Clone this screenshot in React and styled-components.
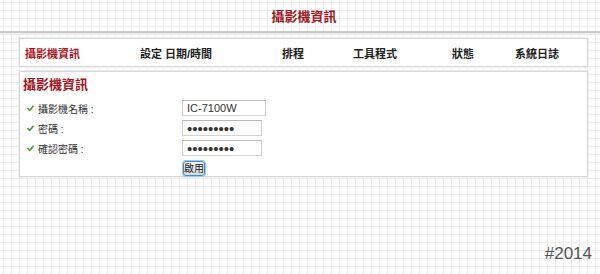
import React from 'react';
import styled, { createGlobalStyle } from 'styled-components';

const GlobalStyle = createGlobalStyle`
  html, body {
    margin: 0;
    padding: 0;
  }
  body {
    width: 600px;
    height: 274px;
    overflow: hidden;
    font-family: "Liberation Sans", "Noto Sans CJK TC", sans-serif;
    background-color: #fff;
    background-image:
      linear-gradient(to right, #ececec 1px, transparent 1px),
      linear-gradient(to bottom, #ececec 1px, transparent 1px);
    background-size: 8px 8px;
    background-position: 3px 2px;
  }
`;

const Page = styled.div`
  width: 600px;
  height: 274px;
  display: flex;
  flex-direction: column;
`;

const Header = styled.div`
  height: 31px;
  display: flex;
  align-items: center;
  justify-content: center;
  padding-left: 8px;
  border-bottom: 2px solid #cacaca;
  box-shadow: 0 1px 0 #eee;
`;

const Title = styled.h1`
  margin: 0;
  font-family: "Liberation Serif", "Noto Sans CJK TC", serif;
  font-size: 13px;
  font-weight: bold;
  color: #a3161d;
`;

const Box = styled.div`
  margin: ${p => p.$top}px 12px 0 19px;
  background: #fff;
  border: 1px solid #d6d6d6;
  box-shadow: 0 0 0 1px #f0f0f0;
`;

const Nav = styled.div`
  height: 27px;
  display: flex;
  align-items: center;
  padding-left: 5px;
`;

const NavItem = styled.span`
  width: ${p => p.$w}px;
  flex: none;
  font-size: 11px;
  font-weight: bold;
  color: ${p => (p.$active ? '#b0151c' : '#222')};
  white-space: nowrap;
`;

const Panel = styled.div`
  padding: 4px 0 2px 3px;
  height: 98px;
`;

const PanelTitle = styled.h2`
  margin: 0 0 5px 0;
  font-family: "Liberation Serif", "Noto Sans CJK TC", serif;
  font-size: 13px;
  font-weight: bold;
  color: #a3161d;
  line-height: 17px;
`;

const Row = styled.div`
  display: flex;
  align-items: center;
  height: 20px;
  padding-left: 4px;
`;

const Label = styled.span`
  display: flex;
  align-items: center;
  gap: 4px;
  width: 155px;
  font-size: 10px;
  color: #333;
`;

const Input = styled.input`
  box-sizing: border-box;
  width: ${p => p.$w}px;
  height: 16px;
  padding: 0 4px;
  border: 1px solid #d2d2d2;
  border-top-color: #b8b8b8;
  background: #fff;
  font-family: "Liberation Sans", sans-serif;
  font-size: ${p => (p.type === 'password' ? '15px' : '11px')};
  color: #333;
  outline: none;
`;

const ButtonRow = styled.div`
  padding-left: 160px;
  margin-top: 0;
`;

const Button = styled.button`
  box-sizing: border-box;
  width: 22px;
  height: 15px;
  padding: 0;
  border: 1px solid #3a8fd0;
  border-radius: 3px;
  box-shadow: 0 0 0 1px #9cc9ec;
  background: linear-gradient(#f4f4f4, #d8d8d8);
  font-family: "Noto Sans CJK TC", sans-serif;
  font-size: 10px;
  line-height: 12px;
  color: #222;
`;

const Footer = styled.div`
  margin-top: auto;
  display: flex;
  justify-content: flex-end;
  padding: 0 8px 10px 0;
`;

const Stamp = styled.span`
  font-family: "Liberation Sans", sans-serif;
  font-size: 17px;
  color: #555;
`;

const Check = () => (
  <svg width="7" height="6" viewBox="0 0 7 6">
    <path d="M0.5 3 L2.7 5.3 L6.5 0.8" fill="none" stroke="#5c9e3c" strokeWidth="1.8" />
  </svg>
);

const navItems = [
  { label: '攝影機資訊', w: 115, active: true },
  { label: '設定 日期/時間', w: 142 },
  { label: '排程', w: 71 },
  { label: '工具程式', w: 99 },
  { label: '狀態', w: 63 },
  { label: '系統日誌', w: 70 },
];

const fields = [
  { label: '攝影機名稱 :', type: 'text', value: 'IC-7100W', w: 84 },
  { label: '密碼 :', type: 'password', value: '123456789', w: 80 },
  { label: '確認密碼 :', type: 'password', value: '123456789', w: 80 },
];

export default function App() {
  return (
    <Page>
      <GlobalStyle />
      <Header>
        <Title>攝影機資訊</Title>
      </Header>
      <Box $top={5}>
        <Nav>
          {navItems.map(item => (
            <NavItem key={item.label} $w={item.w} $active={item.active}>
              {item.label}
            </NavItem>
          ))}
        </Nav>
      </Box>
      <Box $top={4}>
        <Panel>
          <PanelTitle>攝影機資訊</PanelTitle>
          {fields.map(f => (
            <Row key={f.label}>
              <Label>
                <Check />
                {f.label}
              </Label>
              <Input type={f.type} defaultValue={f.value} $w={f.w} readOnly />
            </Row>
          ))}
          <ButtonRow>
            <Button>啟用</Button>
          </ButtonRow>
        </Panel>
      </Box>
      <Footer>
        <Stamp>#2014</Stamp>
      </Footer>
    </Page>
  );
}
